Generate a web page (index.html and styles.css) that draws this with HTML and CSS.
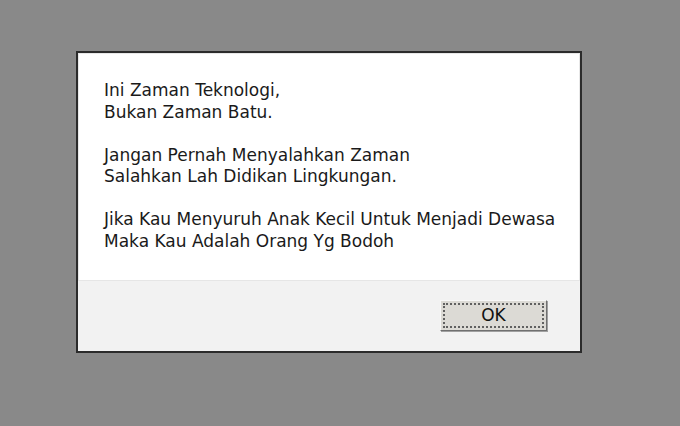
FILE: index.html
```html
<!DOCTYPE html>
<html>
<head>
<meta charset="utf-8">
<link rel="stylesheet" href="styles.css">
</head>
<body>
<div class="dialog">
  <div class="content">
    <p>Ini Zaman Teknologi,<br>Bukan Zaman Batu.</p>
    <p>Jangan Pernah Menyalahkan Zaman<br>Salahkan Lah Didikan Lingkungan.</p>
    <p>Jika Kau Menyuruh Anak Kecil Untuk Menjadi Dewasa<br>Maka Kau Adalah Orang Yg Bodoh</p>
  </div>
  <div class="footer">
    <button class="btn"><span class="focus">OK</span></button>
  </div>
</div>
</body>
</html>
```
FILE: styles.css
```css
html, body {
  margin: 0;
  height: 100%;
}
body {
  background: #898989;
  padding: 51px 0 0 76px;
  box-sizing: border-box;
  font-family: "DejaVu Sans", sans-serif;
}
.dialog {
  width: 506px;
  height: 302px;
  box-sizing: border-box;
  border: 2px solid #2b2b2b;
  background: #ffffff;
  display: flex;
  flex-direction: column;
  box-shadow: inset 0 0 0 1px #e8e8e8;
}
.content {
  flex: 1;
  padding: 27px 20px 0 26px;
  font-size: 17px;
  line-height: 21.5px;
  color: #1a1a1a;
}
.content p {
  margin: 0 0 21.5px 0;
}
.footer {
  height: 71px;
  box-sizing: border-box;
  background: #f2f2f2;
  border-top: 1px solid #e6e6e6;
  display: flex;
  justify-content: flex-end;
  align-items: flex-start;
  padding: 19px 33px 0 0;
}
.btn {
  width: 107px;
  height: 31px;
  padding: 2px;
  box-sizing: border-box;
  background: #dcdad5;
  border: 1px solid;
  border-color: #f8f8f8 #707070 #707070 #f8f8f8;
  box-shadow: 1px 1px 0 #a0a0a0;
  font-family: "DejaVu Sans", sans-serif;
  font-size: 17px;
  color: #111;
  display: flex;
}
.focus {
  flex: 1;
  border: 2px dotted #606060;
  display: flex;
  align-items: center;
  justify-content: center;
  line-height: 1;
}
```
